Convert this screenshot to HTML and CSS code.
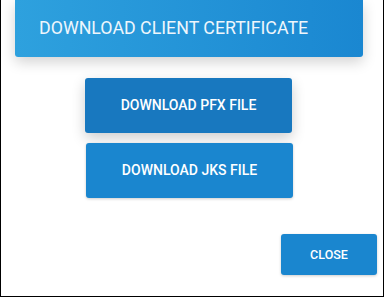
FILE: index.html
```html
<!DOCTYPE html>
<html lang="en">
<head>
  <meta charset="UTF-8">
  <title>Download Client Certificate</title>
  <link rel="stylesheet" href="styles.css">
</head>
<body>
  <div class="dialog">
    <div class="dialog-header">DOWNLOAD CLIENT CERTIFICATE</div>

    <div class="downloads">
      <button class="btn btn-raised">DOWNLOAD PFX FILE</button>
      <button class="btn btn-jks">DOWNLOAD JKS FILE</button>
    </div>

    <div class="actions">
      <button class="btn btn-close">CLOSE</button>
    </div>
  </div>
</body>
</html>
```

FILE: styles.css
```css
body {
  margin: 0;
  padding: 0;
  background: #ffffff;
  font-family: Roboto, 'Liberation Sans', sans-serif;
}

.dialog {
  width: 384px;
  height: 297px;
  box-sizing: border-box;
  border: 1px solid #000000;
  border-top: none;
  background: #ffffff;
  display: flex;
  flex-direction: column;
  overflow: hidden;
}

.dialog-header {
  margin: 0 20px 0 14px;
  height: 57px;
  box-sizing: border-box;
  padding: 0 0 3px 24px;
  display: flex;
  align-items: center;
  background: linear-gradient(90deg, #2ea1de 0%, #1a87d1 100%);
  color: #eef6fc;
  font-size: 17.8px;
  font-weight: 400;
  border-radius: 0 0 3px 3px;
  box-shadow: 0 5px 14px rgba(0, 0, 0, 0.18);
}

.downloads {
  display: flex;
  flex-direction: column;
  align-items: flex-start;
  gap: 10px;
  margin: 21px 0 0 84px;
}

.btn {
  border: none;
  border-radius: 3px;
  background: #1a86cf;
  color: #ffffff;
  font-family: Roboto, 'Liberation Sans', sans-serif;
  font-weight: 500;
  cursor: pointer;
  padding: 0;
  box-shadow: 0 1px 3px rgba(0, 0, 0, 0.2);
}

.downloads .btn {
  width: 207px;
  height: 55px;
  font-size: 14px;
  padding-bottom: 2px;
}

.btn-raised {
  background: #1878bf;
  box-shadow: 0 5px 14px rgba(0, 0, 0, 0.2);
}

.btn-jks {
  margin-left: 1px;
}

.actions {
  display: flex;
  justify-content: flex-end;
  margin: 36px 6px 0 0;
}

.btn-close {
  width: 96px;
  height: 41px;
  font-size: 12.5px;
}
```
